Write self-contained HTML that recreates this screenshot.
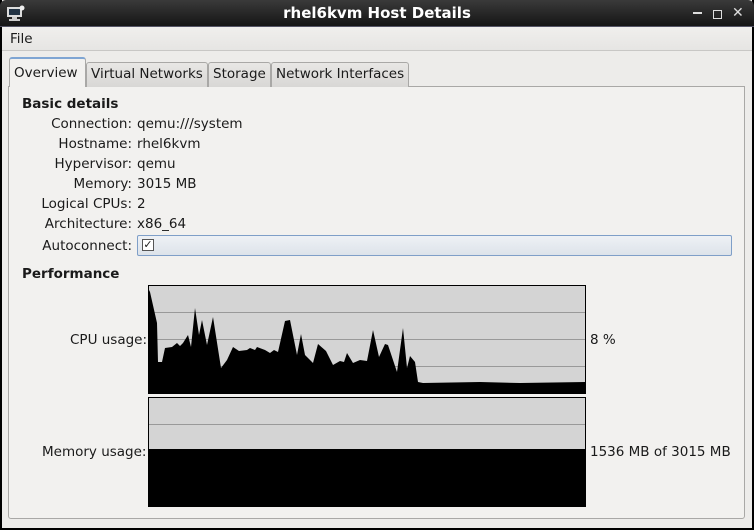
<!DOCTYPE html>
<html><head><style>
*{margin:0;padding:0;box-sizing:border-box}
body{width:754px;height:530px;background:#000;font-family:"DejaVu Sans","Liberation Sans",sans-serif;font-size:13.5px;color:#1a1a1a;position:relative;overflow:hidden}
.win{position:absolute;left:2px;top:0;width:750px;height:528px;background:#edecea}
.title{position:absolute;left:0;top:0;width:754px;height:27px;background:linear-gradient(#3a3a3a,#151515);color:#fff;font-weight:bold;font-size:15px;text-align:center;line-height:26px;border-radius:6px 6px 0 0;border-bottom:1px solid #556}
.menu{position:absolute;left:2px;top:27px;width:750px;height:24px;background:linear-gradient(#f0efed,#e6e5e3);border-bottom:1px solid #c8c7c5}
.menu span{position:absolute;left:8px;top:4px}
.panel{position:absolute;left:8px;top:86px;width:737px;height:433px;border:1px solid #a9a8a6;background:#f2f1ef;border-radius:0 0 3px 3px}
.tab{position:absolute;top:62px;height:25px;border:1px solid #a9a8a6;border-bottom:none;background:linear-gradient(#e8e7e5,#d8d7d5);padding:3px 4px 0;font-size:13.5px;border-radius:3px 3px 0 0}
.tab.act{top:57px;height:30px;background:#f2f1ef;border-top:2px solid #7fa5d3;padding-top:6px}
.t{position:absolute;white-space:nowrap}
.r{text-align:right;width:130px;left:2px}
.b{font-weight:bold}
.g{position:absolute;background:#d4d4d4;border:1px solid #000}
.gl{position:absolute;left:0;right:0;height:1px;background:#999}
</style></head><body>
<div class="win"></div>
<div class="title">rhel6kvm Host Details
<svg style="position:absolute;left:6px;top:5px" width="20" height="17"><rect x="1" y="2" width="15" height="10" fill="#ddd"/><rect x="3" y="4" width="11" height="6" fill="#234"/><rect x="6" y="12" width="5" height="2" fill="#ccc"/><rect x="3" y="14" width="11" height="2" fill="#ccc"/><circle cx="16" cy="3" r="2.5" fill="#eee"/></svg>
<span style="position:absolute;left:693px;top:12px;width:9px;height:2px;background:#ddd"></span>
<span style="position:absolute;left:713px;top:10px;width:9px;height:9px;border:1.5px solid #ddd"></span>
<span style="position:absolute;left:732px;top:0;font-size:14px;color:#ddd">✕</span>
</div>
<div class="menu"><span>File</span></div>
<div class="panel"></div>
<div class="tab" style="left:86px">Virtual Networks</div>
<div class="tab" style="left:208px">Storage</div>
<div class="tab" style="left:271px">Network Interfaces</div>
<div class="tab act" style="left:9px;width:77px">Overview</div>
<div class="t b" style="left:22px;top:96px">Basic details</div>
<div class="t r" style="top:116px">Connection:</div><div class="t" style="left:137px;top:116px">qemu:///system</div>
<div class="t r" style="top:136px">Hostname:</div><div class="t" style="left:137px;top:136px">rhel6kvm</div>
<div class="t r" style="top:156px">Hypervisor:</div><div class="t" style="left:137px;top:156px">qemu</div>
<div class="t r" style="top:176px">Memory:</div><div class="t" style="left:137px;top:176px">3015 MB</div>
<div class="t r" style="top:196px">Logical CPUs:</div><div class="t" style="left:137px;top:196px">2</div>
<div class="t r" style="top:216px">Architecture:</div><div class="t" style="left:137px;top:216px">x86_64</div>
<div class="t r" style="top:238px">Autoconnect:</div>
<div style="position:absolute;left:137px;top:235px;width:595px;height:21px;border:1px solid #7f9fc8;border-radius:2px;background:linear-gradient(#eef1f5,#dde3ea)"></div>
<div style="position:absolute;left:142px;top:239px;width:12px;height:12px;border:1px solid #555;background:#fff;font-size:11px;line-height:10px;text-align:center">✓</div>
<div class="t b" style="left:22px;top:266px">Performance</div>
<div class="g" style="left:148px;top:285px;width:438px;height:109px">
<div class="gl" style="top:26px"></div><div class="gl" style="top:53px"></div><div class="gl" style="top:80px"></div></div>
<svg style="position:absolute;left:0;top:0" width="754" height="530"><polygon fill="#000" points="149,393 149,290 150,292 157,323 158,362 162,362 165,348 172,347 177,343 180,346 183,343 188,335 191,347 195,308 199,335 202,320 207,345 213,317 221,368 227,360 233,347 239,351 247,350 250,348 255,350 257,347 265,350 270,353 274,350 278,352 285,321 290,320 297,355 301,334 305,355 313,363 318,344 326,351 333,365 340,361 344,362 347,353 353,363 360,360 367,361 373,330 379,357 385,344 388,345 397,372 403,328 407,368 410,356 415,362 418,382 423,383 480,382 520,383 585,382 585,393"/></svg>
<div class="t" style="left:70px;top:332px">CPU usage:</div>
<div class="t" style="left:590px;top:332px">8 %</div>
<div class="g" style="left:148px;top:397px;width:438px;height:110px">
<div class="gl" style="top:26px"></div>
<div style="position:absolute;left:0;right:0;top:51px;bottom:0;background:#000"></div></div>
<div class="t" style="left:42px;top:444px">Memory usage:</div>
<div class="t" style="left:590px;top:444px">1536 MB of 3015 MB</div>
</body></html>
